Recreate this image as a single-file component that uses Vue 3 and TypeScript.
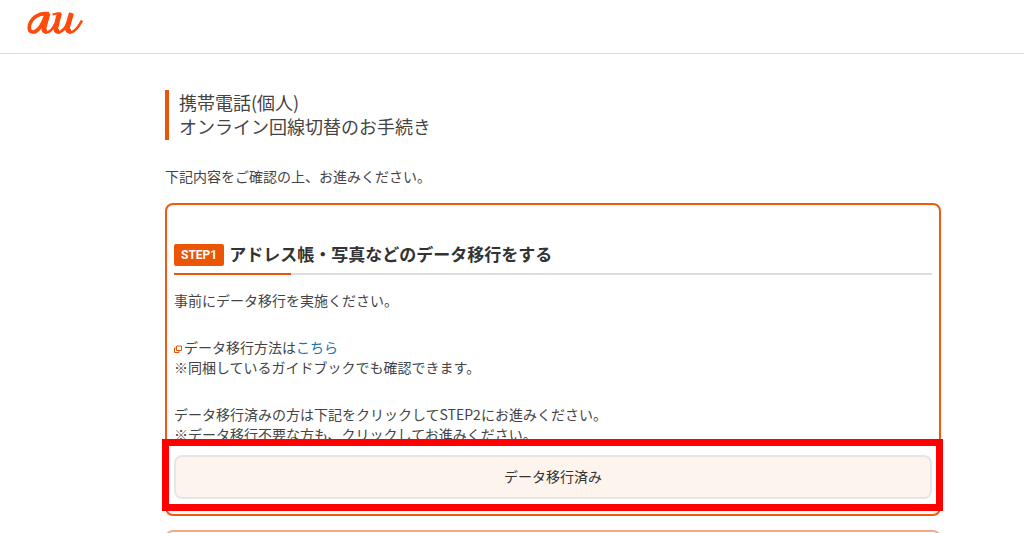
<script setup lang="ts">
import { ref } from 'vue'

const migrated = ref<boolean>(false)
</script>

<template>
  <div class="page">
    <header class="header">
      <a class="brand" href="#" aria-label="au">
        <svg width="58" height="24" viewBox="0 0 58 24" fill="none" aria-hidden="true">
          <g stroke-linejoin="round">
            <path d="M23 2.800C12 1 5 8 3.500 14.500C2 22 8.500 23 13 17.500C16.500 13 18.500 8 20 3.500" stroke-width="3.600" />
            <path d="M22 2L18 16.500C17.300 19.500 18.500 20.500 21 20.500" stroke-width="5" />
            <path d="M20 21.500C24 21 27 18 29 13" stroke-width="2.500" />
            <path d="M26.500 3.500Q31 2.200 35 2.200" stroke-width="2" />
            <path d="M33.500 2L30 15.500C29 19.500 30.500 20.500 33 20.500" stroke-width="5" />
            <path d="M32 21.500C37 21 40 16 42 11" stroke-width="2.800" />
            <path d="M45.500 2L41.500 16C41 19.500 42.500 20.500 45 20.500" stroke-width="5" />
            <path d="M44 21.500C50 21 53 14.500 56 9.500" stroke-width="2.500" />
          </g>
        </svg>
      </a>
    </header>

    <main class="content">
      <h1 class="title">携帯電話(個人)<br />オンライン回線切替のお手続き</h1>
      <p class="lead">下記内容をご確認の上、お進みください。</p>

      <section class="card">
        <h2 class="step-title">
          <span class="badge">STEP1</span>
          <span class="step-name">アドレス帳・写真などのデータ移行をする</span>
        </h2>
        <p class="text">事前にデータ移行を実施ください。</p>
        <p class="text">
          <svg class="popup" width="8" height="8" viewBox="0 0 8 8" fill="none" aria-hidden="true">
            <path d="M2.500 1H7.500V5.500H2.500Z" />
            <path d="M2.500 3H.5V7.500H5V5.500" />
          </svg>データ移行方法は<a class="link" href="#">こちら</a><br />※同梱しているガイドブックでも確認できます。
        </p>
        <p class="text">データ移行済みの方は下記をクリックしてSTEP2にお進みください。<br />※データ移行不要な方も、クリックしてお進みください。</p>
        <div class="action">
          <button class="done" type="button" :aria-pressed="migrated" @click="migrated = true">データ移行済み</button>
          <span class="marker" aria-hidden="true"></span>
        </div>
      </section>

      <section class="card card-next"></section>
    </main>
  </div>
</template>

<style>
body {
  margin: 0;
  background: #fff;
}
</style>

<style scoped>
.page {
  height: 100vh;
  overflow: hidden;
  font-family: "Noto Sans CJK JP", sans-serif;
  font-size: 14px;
  font-weight: 400;
  line-height: 20px;
  color: #444;
}

.header {
  box-sizing: border-box;
  height: 54px;
  padding: 11px 26px;
  border-bottom: 1px solid #ddd;
}

.brand {
  display: inline-block;
}

.brand svg {
  display: block;
  stroke: #ff4b0a;
}

.content {
  padding: 36px 83px 0 165px;
}

.title {
  margin: 0;
  padding: 0 0 2px 10px;
  border-left: 4px solid #eb5505;
  font-size: 18px;
  font-weight: 400;
  line-height: 24px;
}

.lead {
  margin: 26px 0 17px;
}

.card {
  padding: 39px 7px 15px;
  border: 2px solid #f0590f;
  border-radius: 8px;
}

.card-next {
  margin-top: 14px;
  border-color: #f5aa82;
}

.step-title {
  position: relative;
  display: flex;
  align-items: flex-start;
  gap: 5px;
  margin: 0 0 15px;
  padding-bottom: 7px;
  border-bottom: 2px solid #ddd;
  font-size: 17px;
  font-weight: 700;
  line-height: 22px;
  color: #333;
}

.step-title::after {
  content: "";
  position: absolute;
  left: 0;
  bottom: -2px;
  width: 117px;
  height: 2px;
  background: #eb5505;
}

.step-name {
  line-height: 20px;
}

.badge {
  padding: 0 7px;
  border-radius: 2px;
  background: #eb5505;
  color: #fff;
  font-family: "Roboto", "Liberation Sans", sans-serif;
  font-size: 12px;
}

.text {
  margin: 0 0 27px;
}

.popup {
  margin-right: 2px;
  stroke: #eb5505;
}

.link {
  color: #1a73ad;
  text-decoration: none;
}

.action {
  position: relative;
  margin-top: -16px;
}

.done {
  display: block;
  width: 100%;
  height: 44px;
  padding: 0 0 3px;
  border: 2px solid #e6e6e8;
  border-radius: 8px;
  background: #fef4ee;
  color: #333;
  font: inherit;
  cursor: pointer;
}

.marker {
  position: absolute;
  inset: -16px -11px -12px -12px;
  border: 7px solid #f00;
  pointer-events: none;
}
</style>
